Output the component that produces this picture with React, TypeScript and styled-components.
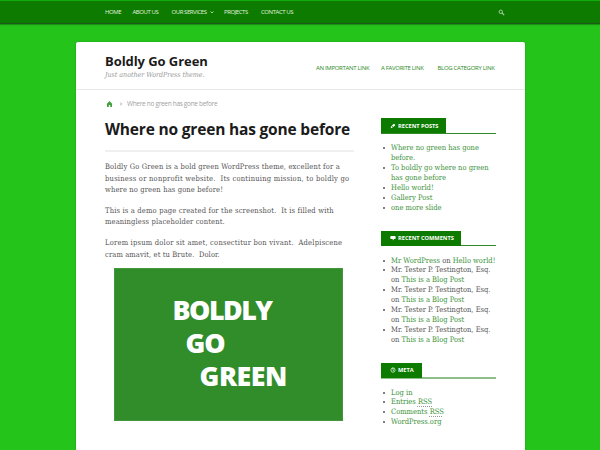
import React from "react";
import styled, { createGlobalStyle } from "styled-components";

const Global = createGlobalStyle`
  * { box-sizing: border-box; }
  html, body { margin: 0; height: 450px; overflow: hidden; background: #25c41b; }
  body { font-family: "DejaVu Serif Condensed", "DejaVu Serif", serif; font-stretch: condensed; color: #555; }
`;

const Page = styled.div`
  width: 600px;
  height: 450px;
  overflow: hidden;
  display: flex;
  flex-direction: column;
  align-items: center;
  background: #25c41b;
`;

const TopBar = styled.header`
  width: 100%;
  height: 24px;
  flex: none;
  display: flex;
  align-items: center;
  justify-content: space-between;
  padding: 0 95px 0 105px;
  background: #0c7b00;
  border-top: 1px solid #12ad08;
  border-bottom: 1px solid #1c5a17;
  box-shadow: 0 1px 1px rgba(0, 60, 0, 0.35);
`;

const Nav = styled.nav`
  display: flex;
  align-items: center;
`;

const NavItem = styled.a<{ $w: number }>`
  width: ${(p) => p.$w}px;
  display: flex;
  align-items: center;
  gap: 3px;
  white-space: nowrap;
  font: 400 6px/10px "Open Sans", sans-serif;
  letter-spacing: -0.43px;
  color: #e1f0df;
`;

const Card = styled.main`
  width: 449px;
  height: 420px;
  flex: none;
  margin: 18px 0 0 1px;
  background: #fff;
  border-radius: 2px 2px 0 0;
  box-shadow: 0 0 2px rgba(0, 70, 0, 0.35);
`;

const Masthead = styled.div`
  height: 48px;
  display: flex;
  justify-content: space-between;
  padding: 11px 29px 0;
  border-bottom: 1px solid #e8e8e8;
`;

const SiteTitle = styled.h1`
  margin: 0;
  font: 700 13px/17px "Open Sans", sans-serif;
  color: #1b1b1b;
  letter-spacing: -0.07px;
  white-space: nowrap;
`;

const Tagline = styled.div`
  font-size: 7px;
  line-height: 10px;
  font-style: italic;
  color: #999;
  white-space: nowrap;
`;

const LinkNav = styled.nav`
  display: flex;
  padding-top: 10px;
`;

const HeadLink = styled.a<{ $w: number }>`
  width: ${(p) => p.$w}px;
  font: 400 6px/10px "Open Sans", sans-serif;
  letter-spacing: -0.3px;
  color: #2d8a27;
  white-space: nowrap;
`;

const Columns = styled.div`
  display: flex;
  gap: 27px;
  padding: 0 29px;
`;

const Article = styled.article`
  width: 249px;
`;

const Crumbs = styled.div`
  display: flex;
  align-items: center;
  height: 10px;
  margin-top: 9px;
  padding-left: 1px;
  font: 400 6.5px/10px "Open Sans", sans-serif;
  letter-spacing: -0.31px;
  color: #a2a2a2;
  white-space: nowrap;
`;

const CrumbSep = styled.span`
  display: flex;
  width: 14px;
  padding-left: 7px;
  color: #666;
`;

const PostTitle = styled.h2`
  margin: 9px 0 0;
  height: 34px;
  border-bottom: 2px solid #efefef;
  font: 700 15.5px/23px "Open Sans", sans-serif;
  letter-spacing: -0.18px;
  color: #1b1b1b;
  white-space: nowrap;
`;

const Para = styled.p`
  margin: 9.4px 0 0;
`;

const Line = styled.span<{ $ls: number }>`
  display: block;
  font-size: 7.5px;
  line-height: 11.4px;
  letter-spacing: ${(p) => p.$ls}px;
  white-space: pre;
`;

const Banner = styled.div`
  width: 229px;
  height: 153px;
  margin: 8px 0 0 9px;
  padding: 24px 0 0 57.5px;
  background: #318c2a;
  border: 1px solid #43963c;
`;

const BannerLine = styled.div<{ $indent: number; $ls: number }>`
  padding-left: ${(p) => p.$indent}px;
  font: 800 26.8px/33px "Open Sans", sans-serif;
  letter-spacing: ${(p) => p.$ls}px;
  color: #fff;
  white-space: nowrap;
`;

const Sidebar = styled.aside`
  width: 115px;
  padding-top: 28px;
`;

const Widget = styled.section<{ $h: number }>`
  height: ${(p) => p.$h}px;
`;

const WidgetHead = styled.div<{ $soft?: boolean }>`
  height: ${(p) => (p.$soft ? 16 : 15.5)}px;
  display: flex;
  border-bottom: ${(p) => (p.$soft ? "2px solid #8cc088" : "1px solid #2f8b27")};
`;

const WidgetTab = styled.h3<{ $w: number }>`
  width: ${(p) => p.$w}px;
  height: 15px;
  margin: 0;
  padding: 0 0 0 9px;
  display: flex;
  align-items: center;
  gap: 2px;
  background: #0c7b00;
  font: 700 5.7px/10px "Open Sans", sans-serif;
  letter-spacing: -0.03px;
  color: #fff;
  white-space: nowrap;
`;

const List = styled.ul<{ $top?: number }>`
  list-style: none;
  margin: ${(p) => p.$top ?? 9.5}px 0 0;
  padding: 0;
`;

const Item = styled.li`
  display: flex;
  font-size: 7.5px;
  line-height: 9.95px;
  white-space: pre;
  &::before {
    content: "";
    width: 2px;
    height: 2px;
    margin: 4px 6px 0 2px;
    border-radius: 1px;
    background: #555;
  }
`;

const Row = styled.div`
  height: 9.95px;
`;

const A = styled.a`
  color: #3d933a;
`;

const Abbr = styled.abbr`
  text-decoration: underline dotted #999 1px;
  text-underline-offset: 2px;
`;

const Chevron = () => (
  <svg width="4" height="3" viewBox="0 0 4 3"><path d="M.5.5 2 2 3.5.5" fill="none" stroke="#d0e8cd" strokeWidth=".8" /></svg>
);
const Search = () => (
  <svg width="7" height="7" viewBox="0 0 7 7"><circle cx="2.8" cy="2.8" r="1.7" fill="none" stroke="#b5d5b1" strokeWidth=".9" /><path d="m4.2 4.2 2 2" stroke="#b5d5b1" strokeWidth="1.1" /></svg>
);
const Home = () => (
  <svg width="7" height="6" viewBox="0 0 7 6"><path d="M3.5 0 6.6 3.2H6V6H4.2V4H2.8v2H1V3.2H.4Z" fill="#46a03f" /></svg>
);
const Pin = () => (
  <svg width="6" height="6" viewBox="0 0 6 6"><path d="m.7 5.2.5-2.4 1.7 1.6ZM1.8 2.4 4 .8l1.4 1.3-1.9 2Z" fill="#fff" /></svg>
);
const Bubble = () => (
  <svg width="6" height="6" viewBox="0 0 6 6"><path d="M1 1h4l.7.8v1.6l-.7.7H4L3 5.4 2.6 4.1H1L.3 3.4V1.8Z" fill="#fff" /></svg>
);
const Gauge = () => (
  <svg width="6" height="6" viewBox="0 0 6 6"><circle cx="3" cy="3.1" r="2.1" fill="none" stroke="#e3f1e1" strokeWidth=".8" /><path d="M3 .4v2.8l1 .5" fill="none" stroke="#e3f1e1" strokeWidth=".7" /></svg>
);

const testingtonComments = [0, 1, 2, 3];

export default function App() {
  return (
    <>
      <Global />
      <Page>
        <TopBar>
          <Nav>
            <NavItem $w={27.5}>HOME</NavItem>
            <NavItem $w={39}>ABOUT US</NavItem>
            <NavItem $w={52.5}>OUR SERVICES<Chevron /></NavItem>
            <NavItem $w={37}>PROJECTS</NavItem>
            <NavItem $w={34}>CONTACT US</NavItem>
          </Nav>
          <Search />
        </TopBar>
        <Card>
          <Masthead>
            <div>
              <SiteTitle>Boldly Go Green</SiteTitle>
              <Tagline>Just another WordPress theme.</Tagline>
            </div>
            <LinkNav>
              <HeadLink $w={65}>AN IMPORTANT LINK</HeadLink>
              <HeadLink $w={56.5}>A FAVORITE LINK</HeadLink>
              <HeadLink $w={58.5}>BLOG CATEGORY LINK</HeadLink>
            </LinkNav>
          </Masthead>
          <Columns>
            <Article>
              <Crumbs>
                <Home />
                <CrumbSep>›</CrumbSep>
                <span>Where no green has gone before</span>
              </Crumbs>
              <PostTitle>Where no green has gone before</PostTitle>
              <Para>
                <Line $ls={0.156}>Boldly Go Green is a bold green WordPress theme, excellent for a</Line>
                <Line $ls={0.24}>{"business or nonprofit website.  Its continuing mission, to boldly go"}</Line>
                <Line $ls={0.14}>where no green has gone before!</Line>
              </Para>
              <Para>
                <Line $ls={0.18}>{"This is a demo page created for the screenshot.  It is filled with"}</Line>
                <Line $ls={0.14}>meaningless placeholder content.</Line>
              </Para>
              <Para>
                <Line $ls={0.22}>{"Lorem ipsum dolor sit amet, consectitur bon vivant.  Adelpiscene"}</Line>
                <Line $ls={0.12}>{"cram amavit, et tu Brute.  Dolor."}</Line>
              </Para>
              <Banner>
                <BannerLine $indent={0} $ls={-1.5}>BOLDLY</BannerLine>
                <BannerLine $indent={13} $ls={-1.1}>GO</BannerLine>
                <BannerLine $indent={27} $ls={-0.45}>GREEN</BannerLine>
              </Banner>
            </Article>
            <Sidebar>
              <Widget $h={112.5}>
                <WidgetHead><WidgetTab $w={65}><Pin />RECENT POSTS</WidgetTab></WidgetHead>
                <List>
                  <Item><A>{"Where no green has gone\nbefore."}</A></Item>
                  <Item><A>{"To boldly go where no green\nhas gone before"}</A></Item>
                  <Item><A>Hello world!</A></Item>
                  <Item><A>Gallery Post</A></Item>
                  <Item><A>one more slide</A></Item>
                </List>
              </Widget>
              <Widget $h={132}>
                <WidgetHead><WidgetTab $w={80}><Bubble />RECENT COMMENTS</WidgetTab></WidgetHead>
                <List>
                  <Item><Row><A>Mr WordPress</A> on <A>Hello world!</A></Row></Item>
                  {testingtonComments.map((n) => (
                    <Item key={n}>
                      <div>
                        <Row>Mr. Tester P. Testington, Esq.</Row>
                        <Row>on <A>This is a Blog Post</A></Row>
                      </div>
                    </Item>
                  ))}
                </List>
              </Widget>
              <Widget $h={80}>
                <WidgetHead $soft><WidgetTab $w={41}><Gauge />META</WidgetTab></WidgetHead>
                <List $top={9}>
                  <Item><A>Log in</A></Item>
                  <Item><A>Entries <Abbr>RSS</Abbr></A></Item>
                  <Item><A>Comments <Abbr>RSS</Abbr></A></Item>
                  <Item><A>WordPress.org</A></Item>
                </List>
              </Widget>
            </Sidebar>
          </Columns>
        </Card>
      </Page>
    </>
  );
}
